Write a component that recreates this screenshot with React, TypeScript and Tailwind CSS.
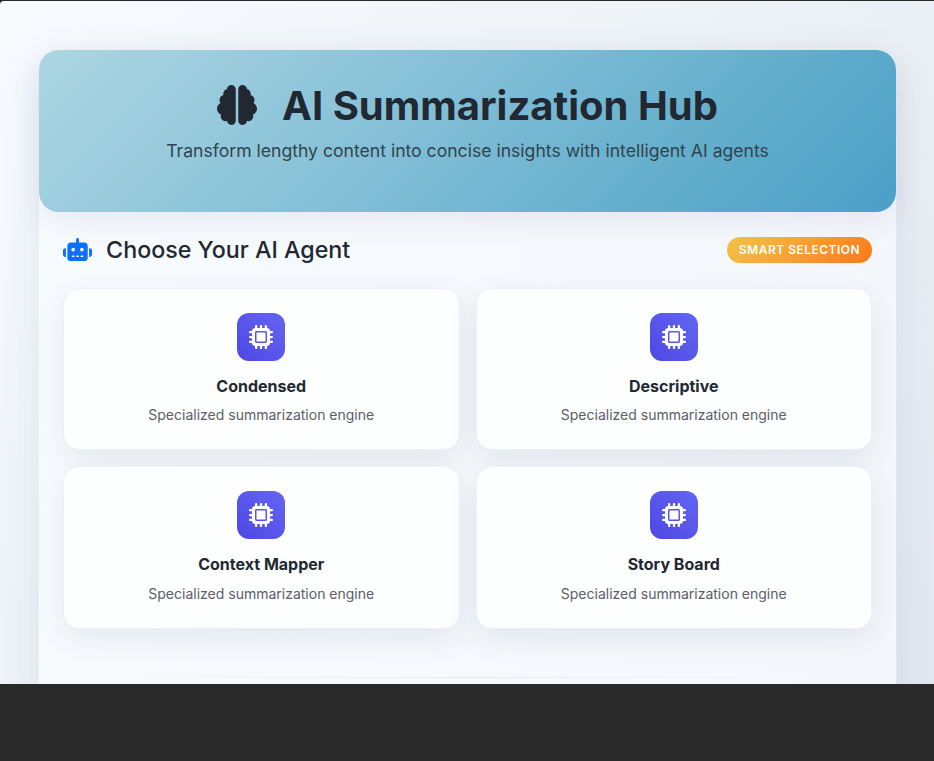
import { FaBrain, FaMicrochip, FaRobot } from 'react-icons/fa6';

const agents = ['Condensed', 'Descriptive', 'Context Mapper', 'Story Board'];

function AgentCard({ name }: { name: string }) {
  return (
    <div className="flex h-[162.4px] flex-col items-center rounded-2xl border border-[#edf1f7] bg-[#fdfefe] pt-6 shadow-[0_10px_30px_rgba(30,50,90,0.09)]">
      <div className="flex size-12 items-center justify-center rounded-xl bg-linear-45 from-[#4f46e5] to-[#6366f1]">
        <FaMicrochip className="size-6 text-white" />
      </div>
      <h3 className="mt-4 text-[16px] leading-[19px] font-bold text-[#212831]">{name}</h3>
      <p className="mt-[8.4px] text-[14px] leading-[21px] text-[#5b6067]">Specialized summarization engine</p>
    </div>
  );
}

export default function App() {
  return (
    <div className="h-[761px] w-[934px] overflow-hidden bg-[#292929] pt-px font-['Inter',sans-serif]">
      <main className="h-[683px] overflow-hidden rounded-tl-[4px] bg-linear-135 from-[#f8fbfe] to-[#e2e8f0] px-[39px] pt-[49px]">
        <div className="h-[1000px] w-[857px] rounded-[24px] bg-linear-to-r from-[#f8fbfe] to-[#f4f7fb] shadow-[0_0_0_1px_rgba(240,240,245,0.4),0_10px_40px_rgba(70,90,140,0.11)]">
          <header className="flex h-[162px] flex-col items-center rounded-[20px] bg-[linear-gradient(135deg,#add6e2_0%,#87c1d8_40%,#5dabca_80%,#4d9fc9_100%)] pt-[30px] shadow-[0_10px_30px_rgba(40,50,100,0.08)]">
            <div className="flex h-[50px] items-center text-[#212831]">
              <FaBrain className="size-10" />
              <h1 className="ml-[25px] pt-0.5 text-[40px] leading-[50px] font-bold">AI Summarization Hub</h1>
            </div>
            <p className="mt-[7px] text-[17.6px] leading-[28px] text-[#314350]">
              Transform lengthy content into concise insights with intelligent AI agents
            </p>
          </header>
          <section className="px-6 pt-6">
            <div className="flex h-[28px] items-center justify-between">
              <div className="flex items-center">
                <FaRobot className="mb-px h-[23.3px] w-[29.1px] text-[#0d6efd]" />
                <h2 className="ml-[14px] text-[23.25px] leading-[28px] font-medium text-[#212831]">Choose Your AI Agent</h2>
              </div>
              <span className="flex h-[26px] w-[145px] items-center justify-center rounded-full bg-linear-135 from-[#f0c348] to-[#fb7718] text-[12px] font-semibold tracking-[0.5px] text-white">
                SMART SELECTION
              </span>
            </div>
            <div className="mt-6 grid grid-cols-2 gap-4">
              {agents.map((name) => (
                <AgentCard key={name} name={name} />
              ))}
            </div>
            <div className="mt-12 h-px bg-linear-to-r from-transparent via-[#e5e8ed] to-transparent" />
          </section>
        </div>
      </main>
    </div>
  );
}
